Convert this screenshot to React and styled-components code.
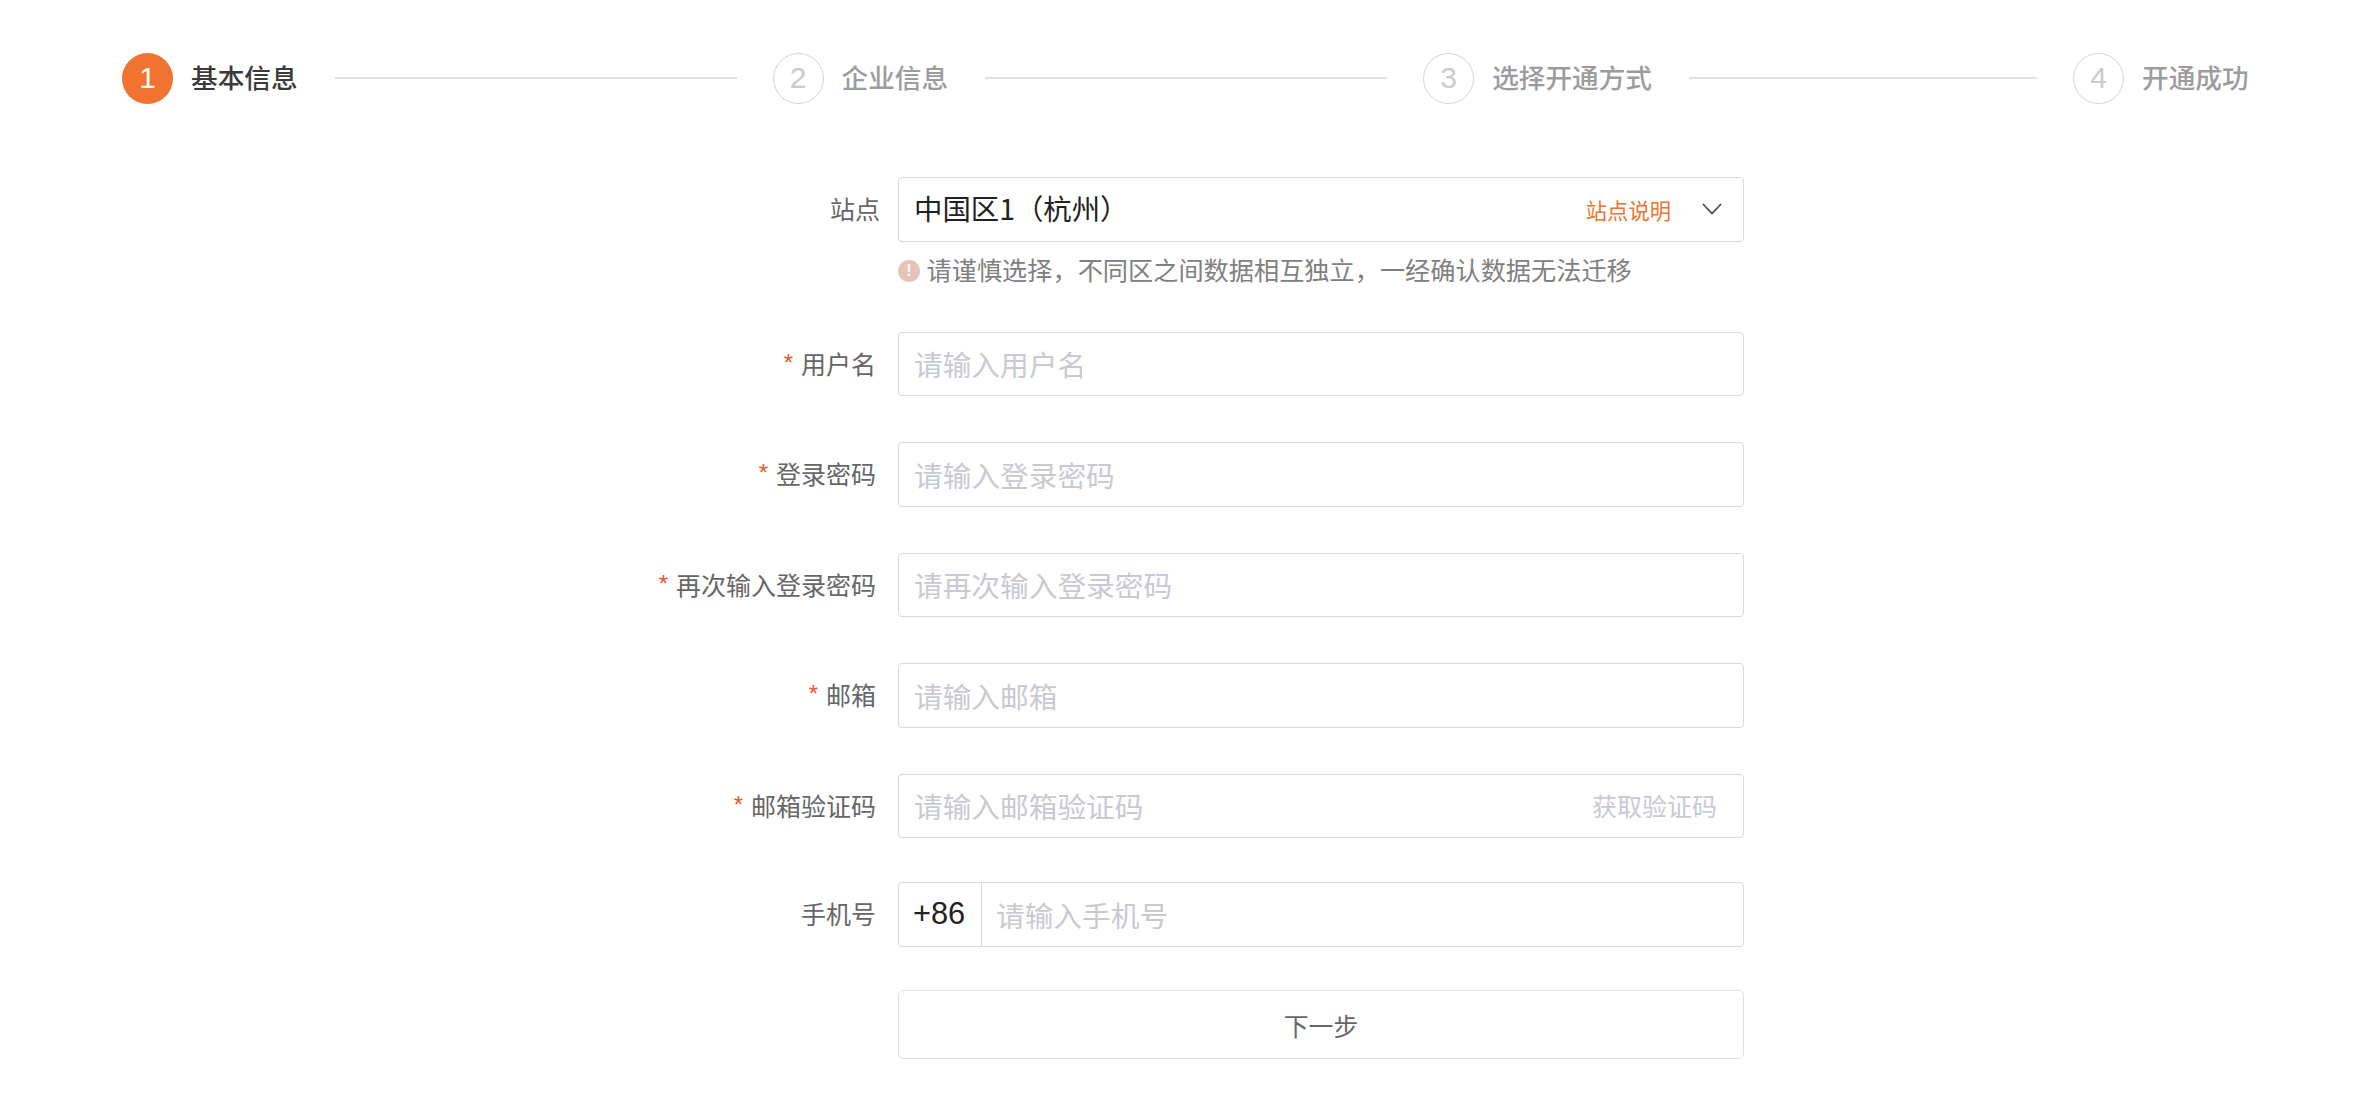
import React from 'react';
import styled, { createGlobalStyle } from 'styled-components';

const Global = createGlobalStyle`
  html, body { margin: 0; padding: 0; background: #fff; }
  body { font-family: "Noto Sans CJK SC", "Liberation Sans", sans-serif; }
  * { box-sizing: border-box; }
`;

const FONT_LATIN = `"Liberation Sans", "Noto Sans CJK SC", sans-serif`;
const FONT_CJK = `"Noto Sans CJK SC", "Liberation Sans", sans-serif`;

const Page = styled.div`
  width: 2370px;
  height: 1098px;
  overflow: hidden;
  padding-top: 53px;
`;

const StepBar = styled.div`
  display: flex;
  align-items: center;
  height: 50px;
  padding-left: 122px;
`;

const Step = styled.div`
  display: flex;
  align-items: center;
  gap: 18px;
`;

const StepCircle = styled.div`
  width: 51px;
  height: 51px;
  border-radius: 50%;
  display: flex;
  align-items: center;
  justify-content: center;
  font-family: ${FONT_LATIN};
  font-size: 30px;
  color: ${p => (p.$active ? '#fff' : '#cbcbcb')};
  background: ${p => (p.$active ? '#f0732f' : '#fff')};
  border: ${p => (p.$active ? 'none' : '1.5px solid #d4d4d4')};
`;

const StepName = styled.div`
  font-family: ${FONT_CJK};
  font-size: 26.65px;
  font-weight: 500;
  line-height: 36px;
  margin-top: -3px;
  white-space: nowrap;
  color: ${p => (p.$active ? '#3a3a3a' : '#9c9c9c')};
`;

const Connector = styled.div`
  width: ${p => p.$w}px;
  height: 2px;
  margin: 0 36px 0 37px;
  background: #e0e0e6;
`;

const Form = styled.div`
  margin-top: 74px;
  display: grid;
  grid-template-columns: 875px 846px;
  column-gap: 23px;
`;

const Label = styled.div`
  grid-column: 1;
  height: ${p => p.$h || 64.5}px;
  margin-top: ${p => p.$mt || 0}px;
  padding-bottom: 2px;
  display: flex;
  align-items: center;
  justify-content: flex-end;
  font-family: ${FONT_CJK};
  font-size: 25px;
  color: #666;
  transform: translateX(${p => p.$dx ?? 1}px);
`;

const Star = styled.span`
  font-family: ${FONT_LATIN};
  font-size: 24px;
  color: #e8562a;
  margin-right: 8px;
  line-height: 1;
`;

const Field = styled.div`
  grid-column: 2;
  height: ${p => p.$h || 64.5}px;
  margin-top: ${p => p.$mt || 0}px;
  display: flex;
  align-items: center;
  background: #fff;
  border: 1.5px solid #d9d9dd;
  border-radius: 4px;
  padding: 0 ${p => p.$pr || 0}px 0 ${p => p.$pl ?? 15}px;
`;

const Value = styled.div`
  flex: 1;
  font-family: ${FONT_CJK};
  font-size: 28.4px;
  color: #222;
  white-space: nowrap;
  margin-top: -3px;
`;

const Input = styled.input`
  flex: 1;
  min-width: 0;
  height: 100%;
  border: 0;
  outline: 0;
  padding: 0;
  background: transparent;
  font-family: ${FONT_CJK};
  font-size: 28.7px;
  color: #222;
  &::placeholder { color: #c8c9d2; opacity: 1; }
`;

const SiteLink = styled.span`
  font-family: ${FONT_CJK};
  font-size: 21.3px;
  color: #f0732f;
  margin-right: 31px;
  white-space: nowrap;
`;

const Chevron = styled.svg`
  width: 20px;
  height: 12px;
  margin-right: 21px;
  flex: none;
`;

const Hint = styled.div`
  grid-column: 2;
  margin-top: 14px;
  height: 26px;
  margin-bottom: 50px;
  display: flex;
  align-items: center;
  gap: 6.5px;
  font-family: ${FONT_CJK};
  font-size: 25.2px;
  color: #808080;
  white-space: nowrap;
`;

const HintIcon = styled.span`
  width: 22px;
  height: 22px;
  margin-top: 5px;
  border-radius: 50%;
  flex: none;
  display: flex;
  align-items: center;
  justify-content: center;
  background: #e5c4b7;
  color: #fff;
  font-family: ${FONT_LATIN};
  font-size: 16px;
  font-weight: 700;
`;

const Code = styled.span`
  font-family: ${FONT_CJK};
  font-size: 25px;
  color: #c8c9d2;
  white-space: nowrap;
  margin-top: -2px;
`;

const Prefix = styled.div`
  width: 83px;
  height: 100%;
  flex: none;
  display: flex;
  align-items: center;
  padding-left: 14px;
  margin-right: 14px;
  border-right: 1.5px solid #d9d9dd;
  font-family: ${FONT_LATIN};
  font-size: 30.8px;
  color: #222;
`;

const NextButton = styled.button`
  grid-column: 2;
  height: 69px;
  margin-top: 43px;
  background: #fff;
  border: 1.5px solid #dfdfe5;
  border-radius: 5px;
  font-family: ${FONT_CJK};
  font-size: 24.8px;
  color: #666;
  padding: 0;
`;

const steps = [
  { n: 1, name: '基本信息', w: 402, active: true },
  { n: 2, name: '企业信息', w: 402 },
  { n: 3, name: '选择开通方式', w: 348 },
  { n: 4, name: '开通成功' },
];

const rows = [
  { label: '用户名', ph: '请输入用户名' },
  { label: '登录密码', ph: '请输入登录密码', mt: 46 },
  { label: '再次输入登录密码', ph: '请再次输入登录密码', mt: 46 },
  { label: '邮箱', ph: '请输入邮箱', mt: 46 },
];

export default function App() {
  return (
    <Page>
      <Global />
      <StepBar>
        {steps.map(s => (
          <React.Fragment key={s.n}>
            <Step>
              <StepCircle $active={s.active}>{s.n}</StepCircle>
              <StepName $active={s.active}>{s.name}</StepName>
            </Step>
            {s.w && <Connector $w={s.w} />}
          </React.Fragment>
        ))}
      </StepBar>
      <Form>
        <Label $dx={5}>站点</Label>
        <Field>
          <Value>中国区1（杭州）</Value>
          <SiteLink>站点说明</SiteLink>
          <Chevron viewBox="0 0 20 12" fill="none">
            <path d="M1 1l9 9.5L19 1" stroke="#444" strokeWidth="1.6" />
          </Chevron>
        </Field>
        <Hint>
          <HintIcon>!</HintIcon>
          请谨慎选择，不同区之间数据相互独立，一经确认数据无法迁移
        </Hint>
        {rows.map(r => (
          <React.Fragment key={r.label}>
            <Label $mt={r.mt}><Star>*</Star>{r.label}</Label>
            <Field $mt={r.mt}><Input placeholder={r.ph} /></Field>
          </React.Fragment>
        ))}
        <Label $mt={46}><Star>*</Star>邮箱验证码</Label>
        <Field $mt={46} $pr={26}>
          <Input placeholder="请输入邮箱验证码" />
          <Code>获取验证码</Code>
        </Field>
        <Label $mt={43.5} $h={65.5}>手机号</Label>
        <Field $mt={43.5} $h={65.5} $pl={0}>
          <Prefix>+86</Prefix>
          <Input placeholder="请输入手机号" />
        </Field>
        <NextButton>下一步</NextButton>
      </Form>
    </Page>
  );
}
